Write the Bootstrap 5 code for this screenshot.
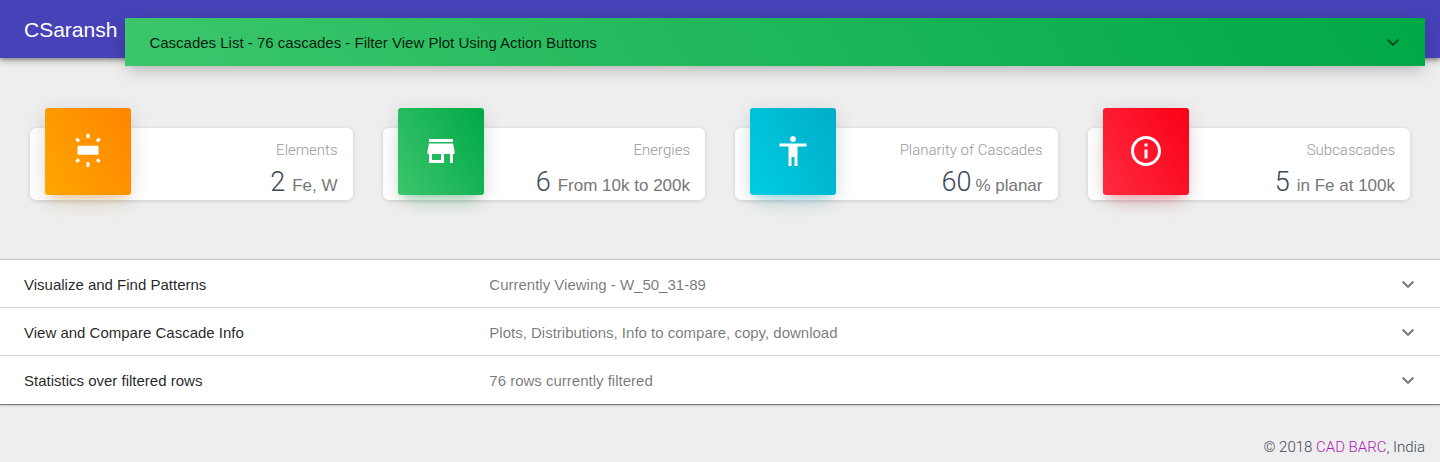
<!DOCTYPE html>
<html lang="en">
<head>
<meta charset="utf-8">
<meta name="viewport" content="width=device-width, initial-scale=1">
<title>CSaransh</title>
<link href="https://cdn.jsdelivr.net/npm/bootstrap@5.3.0/dist/css/bootstrap.min.css" rel="stylesheet">
<style>
  body { background: #eee; color: #3c4858; font-family: "Liberation Sans", Arial, sans-serif; font-size: 15px; line-height: 24px; }
  .light-text { font-family: Roboto, "Liberation Sans", sans-serif; font-weight: 300; }
  .topbar { background: #4742b8; height: 58px; padding: 18px 15px 0 24px; box-shadow: 0 2px 4px rgba(0,0,0,.35), 0 4px 8px rgba(0,0,0,.12); }
  .brand-link { color: #fff; font-size: 21px; }
  .panel-toggle { height: 48px; padding: 2px 20px 0 24px; border: 0; background: none; color: rgba(0,0,0,.87); font-size: 15px; text-align: left; }
  .panel-toggle svg { fill: rgba(0,0,0,.54); }
  .list-toggle { background: linear-gradient(60deg, #3cc66c, #00a846); box-shadow: 0 4px 20px rgba(0,0,0,.14), 0 7px 12px -5px rgba(0,0,0,.14); }
  .stats { padding: 50px 15px 59px; }
  .stats .row { --bs-gutter-x: 30px; }
  .stat-card { height: 72px; margin-top: 20px; padding: 0 15px; border-radius: 6px; background: #fff; box-shadow: 0 1px 4px rgba(0,0,0,.14); }
  .stat-icon { width: 86px; height: 87px; margin-top: -20px; padding-bottom: 1px; border-radius: 3px; }
  .stat-icon svg { fill: #fff; }
  .tile-orange { background: linear-gradient(60deg, #ffa600, #ff8500); box-shadow: 0 12px 20px -10px rgba(255,152,0,.28), 0 4px 20px rgba(0,0,0,.12), 0 7px 8px -5px rgba(255,152,0,.2); }
  .tile-green { background: linear-gradient(60deg, #3cc66c, #00a846); box-shadow: 0 12px 20px -10px rgba(0,168,70,.28), 0 4px 20px rgba(0,0,0,.12), 0 7px 8px -5px rgba(0,168,70,.2); }
  .tile-cyan { background: linear-gradient(60deg, #00cde2, #00aec6); box-shadow: 0 12px 20px -10px rgba(0,188,212,.28), 0 4px 20px rgba(0,0,0,.12), 0 7px 8px -5px rgba(0,188,212,.2); }
  .tile-red { background: linear-gradient(60deg, #ff2b40, #fa0016); box-shadow: 0 12px 20px -10px rgba(255,20,40,.28), 0 4px 20px rgba(0,0,0,.12), 0 7px 8px -5px rgba(255,20,40,.2); }
  .stat-label { padding-top: 11px; color: #999; font-size: 15px; line-height: 22px; }
  .stat-value { gap: 7px; font-size: 27px; line-height: 42px; }
  .stat-unit { color: #777; font-family: "Liberation Sans", Arial, sans-serif; font-size: 17px; }
  .panels { border-top: 1px solid #c6c6c6; background: #fff; box-shadow: 0 1px 1px rgba(0,0,0,.4), 0 1px 3px rgba(0,0,0,.2); }
  .panels h2 + h2 { border-top: 1px solid #d6d6d6; }
  .panels .panel-toggle { height: 47px; }
  .panels h2:last-child .panel-toggle { height: 48px; }
  .panel-title { width: 33.3333%; }
  .panel-note { color: rgba(0,0,0,.54); }
  .page-foot { padding: 31px 15px 3px; }
  .page-foot a { color: #b01fb5; }
</style>
</head>
<body>
<header class="topbar d-flex align-items-start">
  <a class="brand-link text-decoration-none me-2" href="#">CSaransh</a>
  <button type="button" class="panel-toggle list-toggle d-flex flex-fill align-items-center justify-content-between">
    <span>Cascades List - 76 cascades - Filter View Plot Using Action Buttons</span>
    <svg width="24" height="24" viewBox="0 0 24 24" aria-hidden="true"><path d="M7.41 7.84 12 12.42l4.59-4.58L18 9.25l-6 6-6-6z"/></svg>
  </button>
</header>

<main>
  <div class="stats container-fluid">
    <div class="row mx-0">
      <section class="col-3">
        <div class="stat-card d-flex justify-content-between">
          <div class="stat-icon tile-orange d-flex align-items-center justify-content-center">
            <svg width="36" height="36" viewBox="0 0 24 24" aria-hidden="true"><path d="M5 14.5h14v-6H5v6zM11 .55V3.500h2V.55h-2zm8.040 2.500l-1.790 1.790 1.410 1.410 1.800-1.790-1.420-1.410zM13 22.450V19.500h-2v2.950h2zm7.450-3.910l-1.800-1.790-1.410 1.410 1.790 1.800 1.420-1.420zM3.550 4.460l1.790 1.790 1.410-1.410-1.790-1.790-1.410 1.410zm1.410 15.490l1.790-1.800-1.410-1.410-1.790 1.790 1.410 1.420z"/></svg>
          </div>
          <div class="text-end">
            <div class="stat-label light-text">Elements</div>
            <div class="stat-value light-text d-flex justify-content-end align-items-baseline">2 <small class="stat-unit fw-normal">Fe, W</small></div>
          </div>
        </div>
      </section>
      <section class="col-3">
        <div class="stat-card d-flex justify-content-between">
          <div class="stat-icon tile-green d-flex align-items-center justify-content-center">
            <svg width="36" height="36" viewBox="0 0 24 24" aria-hidden="true"><path d="M20 4H4v2h16V4zm1 10v-2l-1-5H4l-1 5v2h1v6h10v-6h4v6h2v-6h1zm-9 4H6v-4h6v4z"/></svg>
          </div>
          <div class="text-end">
            <div class="stat-label light-text">Energies</div>
            <div class="stat-value light-text d-flex justify-content-end align-items-baseline">6 <small class="stat-unit fw-normal">From 10k to 200k</small></div>
          </div>
        </div>
      </section>
      <section class="col-3">
        <div class="stat-card d-flex justify-content-between">
          <div class="stat-icon tile-cyan d-flex align-items-center justify-content-center">
            <svg width="36" height="36" viewBox="0 0 24 24" aria-hidden="true"><path d="M12 2c1.100 0 2 .9 2 2s-.9 2-2 2-2-.9-2-2 .9-2 2-2zm9 7h-6v13h-2v-6h-2v6H9V9H3V7h18v2z"/></svg>
          </div>
          <div class="text-end">
            <div class="stat-label light-text">Planarity of Cascades</div>
            <div class="stat-value light-text d-flex justify-content-end align-items-baseline gap-1">60 <small class="stat-unit fw-normal">% planar</small></div>
          </div>
        </div>
      </section>
      <section class="col-3">
        <div class="stat-card d-flex justify-content-between">
          <div class="stat-icon tile-red d-flex align-items-center justify-content-center">
            <svg width="36" height="36" viewBox="0 0 24 24" aria-hidden="true"><path d="M11 17h2v-6h-2v6zm1-15C6.480 2 2 6.480 2 12s4.480 10 10 10 10-4.480 10-10S17.520 2 12 2zm0 18c-4.410 0-8-3.590-8-8s3.590-8 8-8 8 3.590 8 8-3.590 8-8 8zM11 9h2V7h-2v2z"/></svg>
          </div>
          <div class="text-end">
            <div class="stat-label light-text">Subcascades</div>
            <div class="stat-value light-text d-flex justify-content-end align-items-baseline">5 <small class="stat-unit fw-normal">in Fe at 100k</small></div>
          </div>
        </div>
      </section>
    </div>
  </div>

  <div class="panels">
    <h2 class="m-0 fs-6">
      <button type="button" class="panel-toggle d-flex w-100 align-items-center">
        <span class="panel-title">Visualize and Find Patterns</span>
        <span class="panel-note flex-fill">Currently Viewing - W_50_31-89</span>
        <svg width="24" height="24" viewBox="0 0 24 24" aria-hidden="true"><path d="M7.41 7.84 12 12.42l4.59-4.58L18 9.25l-6 6-6-6z"/></svg>
      </button>
    </h2>
    <h2 class="m-0 fs-6">
      <button type="button" class="panel-toggle d-flex w-100 align-items-center">
        <span class="panel-title">View and Compare Cascade Info</span>
        <span class="panel-note flex-fill">Plots, Distributions, Info to compare, copy, download</span>
        <svg width="24" height="24" viewBox="0 0 24 24" aria-hidden="true"><path d="M7.41 7.84 12 12.42l4.59-4.58L18 9.25l-6 6-6-6z"/></svg>
      </button>
    </h2>
    <h2 class="m-0 fs-6">
      <button type="button" class="panel-toggle d-flex w-100 align-items-center">
        <span class="panel-title">Statistics over filtered rows</span>
        <span class="panel-note flex-fill">76 rows currently filtered</span>
        <svg width="24" height="24" viewBox="0 0 24 24" aria-hidden="true"><path d="M7.41 7.84 12 12.42l4.59-4.58L18 9.25l-6 6-6-6z"/></svg>
      </button>
    </h2>
  </div>
</main>

<footer class="page-foot text-end light-text">© 2018 <a class="text-decoration-none" href="#">CAD BARC</a>, India</footer>
<script src="https://cdn.jsdelivr.net/npm/bootstrap@5.3.0/dist/js/bootstrap.bundle.min.js"></script>
</body>
</html>
